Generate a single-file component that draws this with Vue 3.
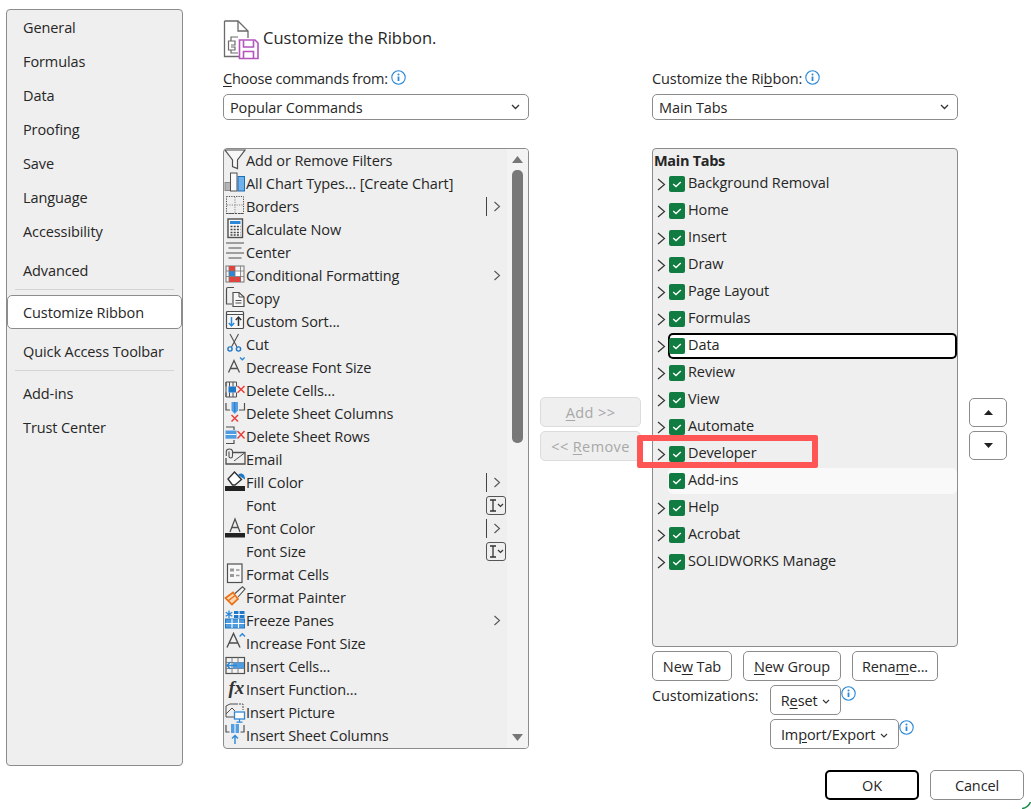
<script setup>
const nav1 = ['General', 'Formulas', 'Data', 'Proofing', 'Save', 'Language', 'Accessibility']
const G = '#4f4f4f'
const B = '#2b88d8'
const R = '#e8413c'
const icons = {
  filter: `<path d="M1 1H21L13.5 11V19.5L8.5 17.5V11Z" fill="#f7f7f7" stroke="${G}" stroke-width="1.2"/>`,
  chart: `<rect x="1" y="10.5" width="6" height="8" fill="#b5b5b5" stroke="#8a8a8a"/><rect x="6.5" y="1" width="6.5" height="18" fill="#fafafa" stroke="${G}"/><rect x="14" y="4.5" width="6.5" height="14.5" fill="#6fb1ea" stroke="#1e6fb8"/>`,
  borders: `<rect x="2.5" y="1.5" width="17" height="17" fill="none" stroke="${G}" stroke-dasharray="1.2 1.2"/><path d="M11 2V18M3 10H19" stroke="#8a8a8a" stroke-dasharray="1.2 1.2"/><path d="M2 18.5H20" stroke="${G}" stroke-dasharray="2 1"/>`,
  calc: `<rect x="4" y="1" width="14.5" height="18.5" fill="#f7f7f7" stroke="${G}" stroke-width="1.4"/><rect x="6" y="3" width="10.5" height="3" fill="${B}"/><path d="M6.5 8.5H16.5M6.5 11.5H16.5M6.5 14.5H16.5M6.5 17H16.5" stroke="#444" stroke-width="1.5" stroke-dasharray="2 1.2"/>`,
  center: `<path d="M2 2H20M4.5 7H17.5M2 12H20M4.5 17H17.5" stroke="${G}" stroke-width="1.2"/>`,
  cond: `<rect x="2" y="2" width="18" height="16" fill="#f3f3f3" stroke="#777"/><rect x="5" y="2" width="6" height="5" fill="${R}"/><rect x="5" y="7" width="6" height="5.5" fill="${B}"/><rect x="5" y="12.5" width="12" height="5.5" fill="${R}"/><rect x="11" y="7" width="5" height="5.5" fill="#fff"/><path d="M2 7H20M2 12.5H20M5 2V18M11 2V18M16.5 2V18" stroke="#777" stroke-width=".8"/>`,
  copy: `<path d="M10 0.5H4Q2.5 0.5 2.5 2V17H8" fill="none" stroke="${G}" stroke-width="1.2"/><path d="M9 5.5H15L20 10V19.5H9Z" fill="#f7f7f7" stroke="${G}" stroke-width="1.2"/><path d="M15 5.5V10H20M11.5 13.5H17.5M11.5 16H17.5" fill="none" stroke="${G}"/>`,
  sort: `<rect x="2.5" y="1.5" width="17" height="17" rx="1" fill="#f7f7f7" stroke="${G}" stroke-width="1.2"/><path d="M2.5 4.5H19.5" stroke="${G}"/><path d="M7.5 7V16M4.8 13L7.5 16L10.2 13" fill="none" stroke="${B}" stroke-width="1.5"/><path d="M14.5 16V7M11.8 10L14.5 7L17.2 10" fill="none" stroke="#333" stroke-width="1.5"/>`,
  cut: `<path d="M6 1L13 14M14.5 1L7.5 14" stroke="${G}" stroke-width="1.1"/><circle cx="6" cy="16" r="2.1" fill="none" stroke="#1e78c8" stroke-width="1.4"/><circle cx="14.5" cy="16" r="2.1" fill="none" stroke="#1e78c8" stroke-width="1.4"/>`,
  dec: `<path d="M4.5 16.5L10 4.5L15.5 16.5M6.5 12.5H13.5" fill="none" stroke="${G}" stroke-width="1.3"/><path d="M16 1.5L18.3 3.7L20.6 1.5" fill="none" stroke="${B}" stroke-width="1.4"/>`,
  delcell: `<path d="M2 7.5V3H12.5V7.5M2 13.5V18H12.5V13.5M2 3V18M5.5 3V7.5M9 3V7.5M5.5 13.5V18M9 13.5V18" fill="none" stroke="${G}"/><rect x="4.5" y="7.5" width="7.5" height="6" fill="#1e78c8"/><path d="M13.5 7L20.5 13.8M20.5 7L13.5 13.8" stroke="${R}" stroke-width="1.5"/>`,
  delcol: `<path d="M2 1V8H6M20.5 1V8H15" fill="none" stroke="${G}" stroke-width="1.2"/><path d="M7.5 0H14V8.5L10.75 12L7.5 8.5Z" fill="#56a0e2"/><path d="M10.75 0V10" stroke="#1e78c8"/><path d="M7.5 13L14 19.5M14 13L7.5 19.5" stroke="${R}" stroke-width="1.5"/>`,
  delrow: `<path d="M2 2H10V5M2 18.5H10V15" fill="none" stroke="${G}" stroke-width="1.2"/><path d="M1.5 5.5H12.5V13.7H1.5Z" fill="#4f9ce0"/><path d="M1.5 9.5H12.5" stroke="#fff" stroke-width=".9"/><path d="M13.5 6L20.5 13.5M20.5 6L13.5 13.5" stroke="${R}" stroke-width="1.5"/>`,
  email: `<path d="M9 4.5H21V16H2V10" fill="none" stroke="${G}" stroke-width="1.3"/><path d="M20.5 5L10 13" fill="none" stroke="${G}"/><path d="M5 3.5V8.5Q5 10 6.7 10Q8.5 10 8.5 8V3Q8 1 5.5 1Q2.3 1 2.3 3.5V8" fill="none" stroke="${G}" stroke-width="1.1"/>`,
  fill: `<path d="M4 8L10.5 1L17.5 8.5L11 14H8.5Z" fill="#fff" stroke="#333" stroke-width="1.4"/><path d="M14 4C17 1 21 3 21 8.5L18.5 7Z" fill="#1e78c8"/><rect x="1" y="15" width="20" height="5" fill="#222"/>`,
  fcolor: `<path d="M6 15L11 2L16 15M7.8 10.5H14.2" fill="none" stroke="${G}" stroke-width="1.3"/><rect x="1" y="16" width="20" height="4.5" fill="#222"/>`,
  fmt: `<rect x="3.5" y="1" width="14.5" height="18.5" fill="#f7f7f7" stroke="${G}" stroke-width="1.2"/><rect x="6" y="5.5" width="4" height="3" fill="#999"/><rect x="6" y="11" width="4" height="3" fill="#999"/><path d="M12 7H15.5M12 12.5H15.5" stroke="#999" stroke-width="1.4"/>`,
  painter: `<path d="M1.5 12L9 6.5L14 13L8 18.5Z" fill="#fbd7b3" stroke="#e8731a" stroke-width="1.7"/><path d="M4 15L11 9.5" stroke="#e8731a" stroke-width="1.5"/><path d="M11 7.5L18.5 0.8L21 3L14 11" fill="#f3f3f3" stroke="${G}" stroke-width="1.1"/>`,
  freeze: `<rect x="10" y="2" width="10.5" height="7" fill="#1e78c8"/><rect x="1.5" y="10" width="19" height="9" fill="#4f9ce0" stroke="#1e78c8"/><path d="M1.5 14.5H20.5M8 10V19M14.5 10V19M15 2V9M10 5.5H20.5" stroke="#fff" stroke-width="1.1"/><path d="M5 1.5V9M1.7 3.2L8.3 7.3M8.3 3.2L1.7 7.3" stroke="${B}" stroke-width="1.3"/>`,
  inc: `<path d="M3 15.5L9.5 1.5L16 15.5M5.2 11H13.8" fill="none" stroke="${G}" stroke-width="1.4"/><path d="M15.6 4.6L18.3 1.8L21 4.6" fill="none" stroke="${B}" stroke-width="1.4"/>`,
  inscell: `<rect x="2" y="2.5" width="18.5" height="16" fill="#f3f3f3" stroke="${G}" stroke-width="1.2"/><path d="M2 7.5H20.5M2 13.5H20.5M8 2.5V18.5M14 2.5V18.5" stroke="#777" stroke-width=".9"/><rect x="9" y="7.5" width="11" height="6" fill="#4f9ce0"/><path d="M13 10.5H3M6.5 7L3 10.5L6.5 14" fill="none" stroke="${B}" stroke-width="1.5"/>`,
  fx: `<text x="4.5" y="15.5" font-family="Liberation Serif, serif" font-style="italic" font-weight="700" font-size="19" fill="#333">fx</text>`,
  pic: `<path d="M2 16V5L6 3H14M12 16H2" fill="none" stroke="${G}"/><path d="M2 13L8 7L11 10" fill="none" stroke="${G}"/><path d="M15 3H19V9" fill="none" stroke="${G}" stroke-dasharray="2 1"/><rect x="10.5" y="11" width="10" height="7" fill="#fff" stroke="${B}" stroke-width="1.3"/><path d="M15.5 18V21M12.5 21.2H18.5" stroke="${B}" stroke-width="1.2"/>`,
  inscol: `<path d="M2 1V8H5.5M20 1V8H16.5" fill="none" stroke="${G}" stroke-width="1.2"/><rect x="7" y="0" width="8" height="9" fill="#56a0e2"/><path d="M11 0V9" stroke="#fff"/><path d="M11 20V11.5M8 14.5L11 11.5L14 14.5" fill="none" stroke="${B}" stroke-width="1.4"/>`
}
const commands = [
  ['Add or Remove Filters', 'filter'],
  ['All Chart Types... [Create Chart]', 'chart'],
  ['Borders', 'borders', 'split'],
  ['Calculate Now', 'calc'],
  ['Center', 'center'],
  ['Conditional Formatting', 'cond', 'more'],
  ['Copy', 'copy'],
  ['Custom Sort...', 'sort'],
  ['Cut', 'cut'],
  ['Decrease Font Size', 'dec'],
  ['Delete Cells...', 'delcell'],
  ['Delete Sheet Columns', 'delcol'],
  ['Delete Sheet Rows', 'delrow'],
  ['Email', 'email'],
  ['Fill Color', 'fill', 'split'],
  ['Font', '', 'box'],
  ['Font Color', 'fcolor', 'split'],
  ['Font Size', '', 'box'],
  ['Format Cells', 'fmt'],
  ['Format Painter', 'painter'],
  ['Freeze Panes', 'freeze', 'more'],
  ['Increase Font Size', 'inc'],
  ['Insert Cells...', 'inscell'],
  ['Insert Function...', 'fx'],
  ['Insert Picture', 'pic'],
  ['Insert Sheet Columns', 'inscol']
].map(([name, icon, extra]) => ({ name, svg: icons[icon] || '', extra }))
const tabs = ['Background Removal', 'Home', 'Insert', 'Draw', 'Page Layout', 'Formulas', 'Data', 'Review', 'View', 'Automate', 'Developer', 'Add-ins', 'Help', 'Acrobat', 'SOLIDWORKS Manage']
</script>

<template>
  <div class="app">
    <aside class="sidebar">
      <div v-for="n in nav1" :key="n" class="nav">{{ n }}</div>
      <div class="nav adv">Advanced</div>
      <div class="divider"></div>
      <div class="nav active">Customize Ribbon</div>
      <div class="nav quick">Quick Access Toolbar</div>
      <div class="divider"></div>
      <div class="nav quick">Add-ins</div>
      <div class="nav">Trust Center</div>
    </aside>

    <main class="main">
      <header class="head">
        <svg class="head-icon" width="36" height="40" viewBox="0 0 36 40">
          <path d="M1.5 1H15L25 11V18M1.5 1V36.5H16" fill="none" stroke="#6a6a6a" stroke-width="1.3"/>
          <path d="M15 1V11H25" fill="none" stroke="#6a6a6a" stroke-width="1.3"/>
          <path d="M15 17H8V21H5.5V30H8V33H15M8 21H12V25H8M8 27H12V30H8" fill="none" stroke="#6a6a6a" stroke-width="1.2"/>
          <path d="M16.5 20H32L35 23V38.5H16.5Z" fill="#fff" stroke="#b455bd" stroke-width="1.6"/>
          <path d="M20.5 20.5V27H30.5V20.5M20.5 38V31.5H30.5V38" fill="none" stroke="#b455bd" stroke-width="1.6"/>
        </svg>
        <span class="title">Customize the Ribbon.</span>
      </header>

      <div class="columns">
        <section class="col">
          <div class="label"><span class="tight"><u>C</u>hoose commands from:</span>
            <svg class="info" width="15" height="15" viewBox="0 0 15 15"><circle cx="7.5" cy="7.5" r="6.7" fill="#fff" stroke="#2b88d8" stroke-width="1.1"/><circle cx="7.5" cy="4.4" r="1" fill="#2b88d8"/><path d="M7.5 6.5V11" stroke="#2b88d8" stroke-width="1.8"/></svg>
          </div>
          <div class="select">Popular Commands
            <svg width="9" height="6" viewBox="0 0 9 6"><path d="M1 1L4.5 4.5L8 1" fill="none" stroke="#333" stroke-width="1.3"/></svg>
          </div>
          <div class="list left">
            <div class="cmds">
              <div v-for="c in commands" :key="c.name" class="cmd">
                <svg class="cmd-icon" width="22" height="23" viewBox="0 0 22 23" v-html="c.svg"></svg>
                <span class="cmd-name">{{ c.name }}</span>
                <span v-if="c.extra === 'split'" class="bar"></span>
                <svg v-if="c.extra === 'split' || c.extra === 'more'" class="more" width="8" height="11" viewBox="0 0 8 11"><path d="M1.5 1L6.5 5.5L1.5 10" fill="none" stroke="#555" stroke-width="1.1"/></svg>
                <span v-if="c.extra === 'box'" class="ibox">
                  <svg width="20" height="19" viewBox="0 0 20 19"><path d="M4 4H10M4 15H10M7 4V15" fill="none" stroke="#333" stroke-width="1.3"/><path d="M12 8L14.5 10.5L17 8" fill="none" stroke="#333" stroke-width="1.2"/></svg>
                </span>
              </div>
            </div>
            <div class="scroll">
              <svg width="13" height="9" viewBox="0 0 13 9"><path d="M6.5 1L12 8H1Z" fill="#777"/></svg>
              <div class="thumb"></div>
              <div class="spacer"></div>
              <svg width="13" height="9" viewBox="0 0 13 9"><path d="M6.5 8L12 1H1Z" fill="#777"/></svg>
            </div>
          </div>
        </section>

        <section class="mid">
          <button class="btn off"><u>A</u>dd &gt;&gt;</button>
          <button class="btn off">&lt;&lt; <u>R</u>emove</button>
        </section>

        <section class="col">
          <div class="label"><span>Customize the Ri<u>b</u>bon:</span>
            <svg class="info" width="15" height="15" viewBox="0 0 15 15"><circle cx="7.5" cy="7.5" r="6.7" fill="#fff" stroke="#2b88d8" stroke-width="1.1"/><circle cx="7.5" cy="4.4" r="1" fill="#2b88d8"/><path d="M7.5 6.5V11" stroke="#2b88d8" stroke-width="1.8"/></svg>
          </div>
          <div class="select">Main Tabs
            <svg width="9" height="6" viewBox="0 0 9 6"><path d="M1 1L4.5 4.5L8 1" fill="none" stroke="#333" stroke-width="1.3"/></svg>
          </div>
          <div class="list right">
            <div class="tabs-head">Main Tabs</div>
            <div v-for="t in tabs" :key="t" class="tab">
              <span class="chev">
                <svg v-if="t !== 'Add-ins'" width="9" height="13" viewBox="0 0 9 13"><path d="M1 1L7.5 6.5L1 12" fill="none" stroke="#333" stroke-width="1.2"/></svg>
              </span>
              <span class="tab-label" :class="{ focus: t === 'Data', hover: t === 'Add-ins' }">
                <svg class="check" width="16" height="16" viewBox="0 0 16 16"><rect width="16" height="16" rx="2" fill="#107c41"/><path d="M4.2 8L7 10.6L11.8 6" fill="none" stroke="#fff" stroke-width="1.4"/></svg>
                <span class="tab-name">{{ t }}</span>
              </span>
            </div>
          </div>
          <div class="under">
            <button class="btn newtab">Ne<u>w</u> Tab</button>
            <button class="btn newgroup"><u>N</u>ew Group</button>
            <button class="btn rename">Rena<u>m</u>e...</button>
          </div>
          <div class="custom">
            <span class="custom-label">Customizations:</span>
            <div class="custom-btns">
              <div class="custom-row">
                <button class="btn reset">R<u>e</u>set <svg width="8" height="5" viewBox="0 0 8 5"><path d="M1 1L4 4L7 1" fill="none" stroke="#333" stroke-width="1.1"/></svg></button>
                <svg class="info tip" width="15" height="15" viewBox="0 0 15 15"><circle cx="7.5" cy="7.5" r="6.7" fill="#fff" stroke="#2b88d8" stroke-width="1.1"/><circle cx="7.5" cy="4.4" r="1" fill="#2b88d8"/><path d="M7.5 6.5V11" stroke="#2b88d8" stroke-width="1.8"/></svg>
              </div>
              <div class="custom-row">
                <button class="btn imp">Im<u>p</u>ort/Export <svg width="8" height="5" viewBox="0 0 8 5"><path d="M1 1L4 4L7 1" fill="none" stroke="#333" stroke-width="1.1"/></svg></button>
                <svg class="info tip" width="15" height="15" viewBox="0 0 15 15"><circle cx="7.5" cy="7.5" r="6.7" fill="#fff" stroke="#2b88d8" stroke-width="1.1"/><circle cx="7.5" cy="4.4" r="1" fill="#2b88d8"/><path d="M7.5 6.5V11" stroke="#2b88d8" stroke-width="1.8"/></svg>
              </div>
            </div>
          </div>
        </section>

        <section class="updown">
          <button class="btn arrow"><svg width="9" height="5" viewBox="0 0 9 5"><path d="M4.5 0L9 5H0Z" fill="#222"/></svg></button>
          <button class="btn arrow"><svg width="9" height="5" viewBox="0 0 9 5"><path d="M4.5 5L9 0H0Z" fill="#222"/></svg></button>
        </section>
      </div>

      <footer class="foot">
        <button class="btn big ok">OK</button>
        <button class="btn big">Cancel</button>
      </footer>
    </main>

    <div class="callout"></div>
    <svg class="corner" width="9" height="7" viewBox="0 0 9 7"><path d="M0 6.5Q6 6 8.5 0" fill="none" stroke="#1f8f4e" stroke-width="1.6"/></svg>
  </div>
</template>

<style>
html, body { margin: 0; background: #fff; }
</style>

<style scoped>
.app {
  position: relative;
  box-sizing: border-box;
  width: 1031px;
  height: 809px;
  overflow: hidden;
  display: flex;
  padding: 9px 7px 0 6px;
  background: #fff;
  color: #262626;
  font-family: "Open Sans", "Noto Sans", sans-serif;
  font-size: 14.5px;
  letter-spacing: -0.1px;
}
u { text-underline-offset: 2px; text-decoration-thickness: 1px; }
.sidebar {
  box-sizing: border-box;
  width: 177px;
  height: 757px;
  padding-top: 1px;
  background: #efefef;
  border: 1px solid #8c8c8c;
  border-radius: 4px;
}
.nav {
  box-sizing: border-box;
  height: 34px;
  line-height: 34px;
  padding-left: 16px;
}
.adv { margin-top: 5px; }
.divider { height: 1px; margin: 1px 8px 0; background: #d4d4d4; }
.active {
  margin: 5px 0 0 0;
  width: 175px;
  background: #fff;
  border: 1px solid #8c8c8c;
  border-radius: 5px;
  line-height: 33px;
  padding-left: 15px;
}
.quick { margin-top: 6px; }
.main { margin-left: 40px; flex: 1; min-width: 0; }
.head { display: flex; align-items: center; gap: 4px; margin-top: 11px; height: 39px; margin-bottom: 9px; }
.head-icon { flex: none; }
.title { font-size: 16.5px; letter-spacing: 0; margin-bottom: 5px; }
.columns { display: grid; grid-template-columns: 306px 101px 306px 38px; column-gap: 11px; }
.col { min-width: 0; }
.label { height: 22px; line-height: 22px; margin-bottom: 4px; display: flex; align-items: flex-start; gap: 3px; }
.tight { letter-spacing: -0.25px; }
.info { flex: none; margin-top: 2px; }
.select {
  box-sizing: border-box;
  height: 26px;
  padding: 0 8px 0 6px;
  border: 1px solid #8c8c8c;
  border-radius: 5px;
  display: flex;
  align-items: center;
  justify-content: space-between;
}
.list { box-sizing: border-box; margin-top: 28px; background: #efefef; border: 1px solid #8c8c8c; border-radius: 4px; overflow: hidden; }
.left { height: 601px; display: flex; }
.right { height: 499px; }
.cmds { width: 283px; flex: none; }
.cmd { height: 23px; display: flex; align-items: center; }
.cmd-icon { flex: none; display: block; overflow: visible; }
.cmd-name { flex: 1; white-space: nowrap; }
.bar { width: 1px; height: 19px; background: #444; margin-right: 6px; }
.more { margin-right: 6px; flex: none; }
.ibox { box-sizing: border-box; width: 20px; height: 19px; margin-right: 1px; border: 1px solid #555; border-radius: 3px; display: flex; align-items: center; justify-content: center; flex: none; overflow: hidden; }
.ibox svg { flex: none; }
.scroll { flex: 1; background: #f3f3f3; display: flex; flex-direction: column; align-items: center; padding: 6px 0 6px; }
.thumb { width: 11px; height: 273px; margin-top: 6px; background: #787878; border-radius: 5px; }
.spacer { flex: 1; }
.mid { padding-top: 329px; display: flex; flex-direction: column; gap: 4px; }
.updown { padding-top: 330px; display: flex; flex-direction: column; gap: 4px; }
.btn {
  box-sizing: border-box;
  height: 30px;
  padding: 0;
  background: #fff;
  border: 1px solid #8c8c8c;
  border-radius: 5px;
  font: inherit;
  color: inherit;
  letter-spacing: inherit;
  white-space: nowrap;
}
.off { background: #efefef; border-color: #dcdcdc; color: #a8a8a8; width: 101px; letter-spacing: 0.4px; }
.arrow { width: 38px; height: 29px; display: flex; align-items: center; justify-content: center; }
.tabs-head { font-weight: 700; height: 22px; line-height: 24px; padding-left: 1px; letter-spacing: -0.3px; }
.tab { height: 27px; display: flex; align-items: flex-start; }
.chev { width: 15px; flex: none; display: flex; padding: 7px 0 0 4px; box-sizing: border-box; }
.tab-label { box-sizing: border-box; width: 289px; height: 26px; display: flex; align-items: center; gap: 3px; padding-left: 1px; border-radius: 5px; }
.check { flex: none; }
.tab-name { position: relative; top: -2px; }
.focus { background: #fff; box-shadow: inset 0 0 0 2px #000; }
.hover { background: #f9f9f9; }
.under { display: flex; margin-top: 4px; gap: 11px; }
.newtab { width: 80px; }
.newgroup { width: 98px; }
.rename { width: 86px; }
.custom { display: flex; margin-top: 4px; }
.custom-label { width: 118px; flex: none; line-height: 22px; }
.custom-btns { display: flex; flex-direction: column; gap: 4px; }
.custom-row { display: flex; align-items: flex-start; width: 160px; }
.tip { margin-top: 1px; }
.reset { width: 71px; }
.imp { width: 129px; }
.reset svg, .imp svg { margin-left: 1px; vertical-align: 2px; }
.foot { display: flex; justify-content: flex-end; gap: 11px; margin-top: 21px; height: 30px; }
.big { width: 94px; }
.ok { border: 2px solid #000; }
.callout {
  position: absolute;
  left: 637px;
  top: 435px;
  width: 181px;
  height: 33px;
  box-sizing: border-box;
  border: 6px solid #ff5555;
  border-radius: 2px;
}
.corner { position: absolute; right: 0; bottom: 0; }
</style>
